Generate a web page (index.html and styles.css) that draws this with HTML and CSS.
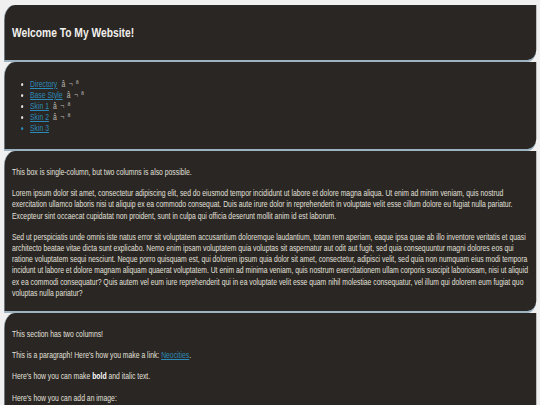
FILE: index.html
```html
<!DOCTYPE html>
<html lang="en">
<head>
<meta charset="utf-8">
<title>Welcome To My Website!</title>
<link rel="stylesheet" href="styles.css">
</head>
<body>
<div class="page">
  <header class="box box-head">
    <h1 class="title">Welcome To My Website!</h1>
  </header>
  <nav class="box box-nav">
    <ul class="nav-list">
      <li><a href="#">Directory</a> <span class="junk">â ¬ ª</span></li>
      <li><a href="#">Base Style</a> <span class="junk">â ¬ ª</span></li>
      <li><a href="#">Skin 1</a> <span class="junk">â ¬ ª</span></li>
      <li><a href="#">Skin 2</a> <span class="junk">â ¬ ª</span></li>
      <li class="current"><a href="#">Skin 3</a></li>
    </ul>
  </nav>
  <section class="box">
    <p>This box is single-column, but two columns is also possible.</p>
    <p>Lorem ipsum dolor sit amet, consectetur adipiscing elit, sed do eiusmod tempor incididunt ut labore et dolore magna aliqua. Ut enim ad minim veniam, quis nostrud exercitation ullamco laboris nisi ut aliquip ex ea commodo consequat. Duis aute irure dolor in reprehenderit in voluptate velit esse cillum dolore eu fugiat nulla pariatur. Excepteur sint occaecat cupidatat non proident, sunt in culpa qui officia deserunt mollit anim id est laborum.</p>
    <p>Sed ut perspiciatis unde omnis iste natus error sit voluptatem accusantium doloremque laudantium, totam rem aperiam, eaque ipsa quae ab illo inventore veritatis et quasi architecto beatae vitae dicta sunt explicabo. Nemo enim ipsam voluptatem quia voluptas sit aspernatur aut odit aut fugit, sed quia consequuntur magni dolores eos qui ratione voluptatem sequi nesciunt. Neque porro quisquam est, qui dolorem ipsum quia dolor sit amet, consectetur, adipisci velit, sed quia non numquam eius modi tempora incidunt ut labore et dolore magnam aliquam quaerat voluptatem. Ut enim ad minima veniam, quis nostrum exercitationem ullam corporis suscipit laboriosam, nisi ut aliquid ex ea commodi consequatur? Quis autem vel eum iure reprehenderit qui in ea voluptate velit esse quam nihil molestiae consequatur, vel illum qui dolorem eum fugiat quo voluptas nulla pariatur?</p>
  </section>
  <section class="box">
    <p>This section has two columns!</p>
    <p>This is a paragraph! Here's how you make a link: <a href="#">Neocities</a>.</p>
    <p>Here's how you can make <strong>bold</strong> and italic text.</p>
    <p>Here's how you can add an image:</p>
  </section>
</div>
</body>
</html>
```

FILE: styles.css
```css
html, body {
  margin: 0;
  padding: 0;
  background: #f0f0f0;
  overflow: hidden;
}

/* The page is laid out at 720px and shown horizontally condensed to 540px */
.page {
  width: 720px;
  box-sizing: border-box;
  padding: 5px 5px 0 5px;
  transform: scaleX(0.75);
  transform-origin: 0 0;
  font-family: "Liberation Sans", Arial, sans-serif;
  font-size: 9.1px;
  color: #e2e0dc;
}

.box {
  background: #2a2623;
  border-left: 1px solid #9db3c2;
  border-bottom: 2px solid #9db3c2;
  border-top-left-radius: 15px;
  border-bottom-right-radius: 12px;
  padding: 6px 6px 2px 10px;
}

.box-head {
  padding: 20px 10px 19px;
}

.box-nav {
  padding: 7px 10px 5px;
}

.title {
  margin: 0;
  font-size: 13.7px;
  line-height: 16px;
  font-weight: bold;
  color: #f2f0ec;
}

.box p {
  margin: 10px 0;
  line-height: 11.2px;
}

.nav-list {
  margin: 10px 0;
  padding-left: 24px;
  line-height: 11px;
}

.nav-list li::marker {
  color: #e2e0dc;
}

.nav-list li.current::marker {
  color: #2b8ab8;
}

a {
  color: #2b8ab8;
  text-decoration: underline;
}

.junk {
  color: #bdbab5;
  margin-left: 3px;
  letter-spacing: 1px;
}

strong {
  color: #fff;
}
```
